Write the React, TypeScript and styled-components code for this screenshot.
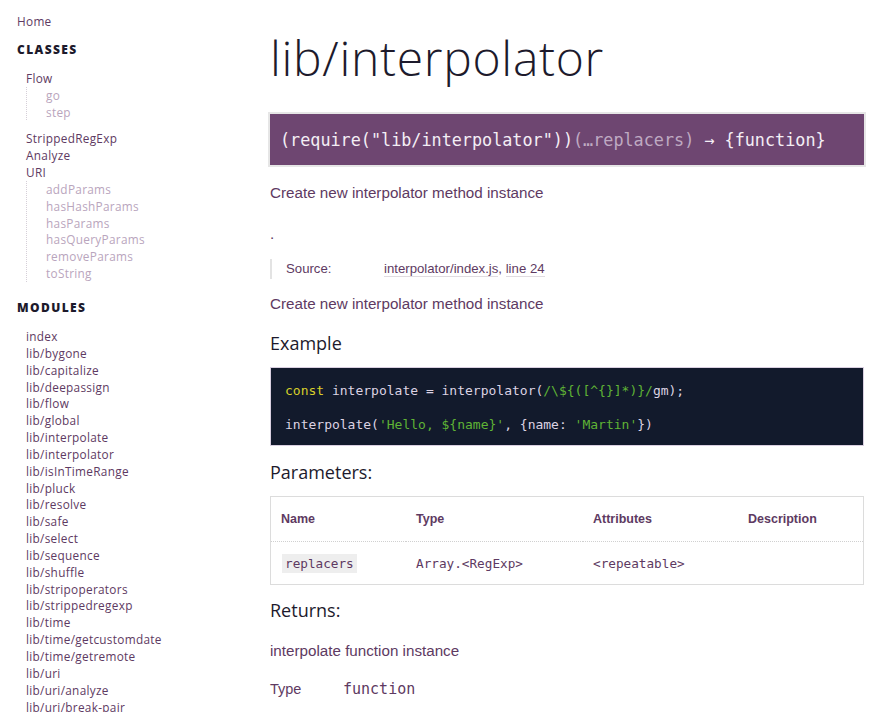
import React from "react";
import styled, { createGlobalStyle } from "styled-components";

const Global = createGlobalStyle`
  html, body { margin: 0; padding: 0; background: #fff; }
  body { font-family: "Open Sans", sans-serif; }
`;

const Page = styled.div`
  display: grid;
  grid-template-columns: 270px 1fr;
  width: 880px;
  height: 712px;
  overflow: hidden;
`;

const Nav = styled.nav`
  padding: 13px 0 0 17px;
  font-family: "Open Sans", sans-serif;
  font-size: 11.8px;
  line-height: 16.85px;
  letter-spacing: 0.3px;
  color: #5e3a62;
`;

const NavLink = styled.div<{ $level?: number }>`
  padding-left: ${(p) => (p.$level === 2 ? 19 : p.$level === 1 ? 9 : 0)}px;
  color: ${(p) => (p.$level === 2 ? "#b9a5bd" : "#5e3a62")};
  white-space: nowrap;
`;

const NavHeading = styled.h3`
  margin: 0;
  font-family: "Open Sans", sans-serif;
  font-weight: 800;
  font-size: 12px;
  letter-spacing: 1.4px;
  color: #1d1a2c;
  line-height: 17px;
`;

const SubList = styled.div`
  margin-left: 9px;
  border-left: 1px dotted #d6cfd8;
`;

const Group = styled.div<{ $mt: number }>`
  margin-top: ${(p) => p.$mt}px;
`;

const Main = styled.main`
  padding: 22px 16px 0 0;
  font-family: "Liberation Sans", Arial, sans-serif;
  color: #5e3a62;
`;

const Title = styled.h1`
  margin: 0;
  font-family: "Open Sans", sans-serif;
  font-weight: 300;
  font-size: 48px;
  line-height: 72px;
  color: #1d1a2c;
  letter-spacing: 0.7px;
`;

const Signature = styled.div`
  margin-top: 20px;
  background: #6e4671;
  box-shadow: 0 0 0 2px #e6e6e6;
  height: 51px;
  display: flex;
  align-items: center;
  padding-left: 10px;
  font-family: "DejaVu Sans Mono", monospace;
  font-size: 16.8px;
  color: #f4eef5;
`;

const Muted = styled.span`
  color: #bfaac2;
`;

const Para = styled.p<{ $mt: number }>`
  margin: ${(p) => p.$mt}px 0 0;
  font-size: 15.2px;
  line-height: 18px;
  color: #5e3a62;
`;

const SourceBox = styled.dl`
  margin: 16px 0 0;
  border-left: 2px solid #e3e3e3;
  padding: 1px 0 1px 14px;
  display: grid;
  grid-template-columns: 98px auto;
  font-size: 13.2px;
  line-height: 18px;
  dt, dd { margin: 0; }
`;

const SrcLink = styled.span`
  border-bottom: 1px solid #e0dce1;
  color: #5e3a62;
`;

const Heading = styled.h4`
  margin: 0;
  font-family: "Open Sans", sans-serif;
  font-weight: 400;
  font-size: 18px;
  color: #1d1a2c;
`;

const CodeBlock = styled.pre`
  margin: 12px 0 0;
  background: #121a2c;
  border: 1px solid #d9cfe0;
  padding: 6px 14px 3px;
  font-family: "DejaVu Sans Mono", monospace;
  font-size: 13px;
  line-height: 34px;
  color: #dcd3e3;
`;

const Kw = styled.span`color: #d7cf2a;`;
const Str = styled.span`color: #5fb335;`;

const Table = styled.table`
  margin-top: 12px;
  width: 100%;
  border-collapse: collapse;
  border: 1px solid #dcdcdc;
  font-size: 12.5px;
  th, td {
    text-align: left;
    padding: 0 10px;
  }
  th {
    height: 44px;
    font-weight: 700;
    color: #5e3a62;
    border-bottom: 1px dotted #d0d0d0;
  }
  td {
    height: 42px;
    font-family: "DejaVu Sans Mono", monospace;
    font-size: 12.7px;
    color: #5e3a62;
  }
`;

const ParamName = styled.code`
  background: #eeeeee;
  padding: 2px 3px;
  margin-left: 1px;
  font-family: "DejaVu Sans Mono", monospace;
`;

const TypeRow = styled.div`
  margin-top: 20px;
  display: grid;
  grid-template-columns: 73px auto;
  align-items: baseline;
  font-size: 14.5px;
`;

const Mono = styled.span`
  font-family: "DejaVu Sans Mono", monospace;
  font-size: 15px;
`;

const classes: { name: string; members?: string[] }[] = [
  { name: "Flow", members: ["go", "step"] },
  { name: "StrippedRegExp" },
  { name: "Analyze" },
  { name: "URI", members: ["addParams", "hasHashParams", "hasParams", "hasQueryParams", "removeParams", "toString"] },
];

const modules = [
  "index", "lib/bygone", "lib/capitalize", "lib/deepassign", "lib/flow", "lib/global",
  "lib/interpolate", "lib/interpolator", "lib/isInTimeRange", "lib/pluck", "lib/resolve",
  "lib/safe", "lib/select", "lib/sequence", "lib/shuffle", "lib/stripoperators",
  "lib/strippedregexp", "lib/time", "lib/time/getcustomdate", "lib/time/getremote",
  "lib/uri", "lib/uri/analyze", "lib/uri/break-pair",
];

export default function App() {
  return (
    <>
      <Global />
      <Page>
        <Nav>
          <NavLink>Home</NavLink>
          <Group $mt={11}>
            <NavHeading>CLASSES</NavHeading>
          </Group>
          <Group $mt={12}>
            {classes.map((c, i) => (
              <Group key={c.name} $mt={i > 0 && classes[i - 1].members ? 10 : 0}>
                <NavLink $level={1}>{c.name}</NavLink>
                {c.members && (
                  <SubList>
                    {c.members.map((m) => (
                      <NavLink key={m} $level={2}>{m}</NavLink>
                    ))}
                  </SubList>
                )}
              </Group>
            ))}
          </Group>
          <Group $mt={17}>
            <NavHeading>MODULES</NavHeading>
          </Group>
          <Group $mt={12}>
            {modules.map((m) => (
              <NavLink key={m} $level={1}>{m}</NavLink>
            ))}
          </Group>
        </Nav>
        <Main>
          <Title>lib/interpolator</Title>
          <Signature>
            (require("lib/interpolator"))<Muted>(…replacers)</Muted>&nbsp;→ {"{function}"}
          </Signature>
          <Para $mt={19}>Create new interpolator method instance</Para>
          <Para $mt={23}>.</Para>
          <SourceBox>
            <dt>Source:</dt>
            <dd>
              <SrcLink>interpolator/index.js</SrcLink>, <SrcLink>line 24</SrcLink>
            </dd>
          </SourceBox>
          <Para $mt={16}>Create new interpolator method instance</Para>
          <Group $mt={18}>
            <Heading>Example</Heading>
          </Group>
          <CodeBlock>
            <Kw>const</Kw> interpolate = interpolator(<Str>{"/\\${([^{}]*)}/"}</Str>gm);{"\n"}
            interpolate(<Str>{"'Hello, ${name}'"}</Str>, {"{name: "}<Str>'Martin'</Str>{"})"}
          </CodeBlock>
          <Group $mt={14}>
            <Heading>Parameters:</Heading>
          </Group>
          <Table>
            <thead>
              <tr>
                <th style={{ width: "115px" }}>Name</th>
                <th style={{ width: "157px" }}>Type</th>
                <th style={{ width: "135px" }}>Attributes</th>
                <th>Description</th>
              </tr>
            </thead>
            <tbody>
              <tr>
                <td><ParamName>replacers</ParamName></td>
                <td>Array.&lt;RegExp&gt;</td>
                <td>&lt;repeatable&gt;</td>
                <td></td>
              </tr>
            </tbody>
          </Table>
          <Group $mt={13}>
            <Heading>Returns:</Heading>
          </Group>
          <Para $mt={20}>interpolate function instance</Para>
          <TypeRow>
            <span>Type</span>
            <Mono>function</Mono>
          </TypeRow>
        </Main>
      </Page>
    </>
  );
}
